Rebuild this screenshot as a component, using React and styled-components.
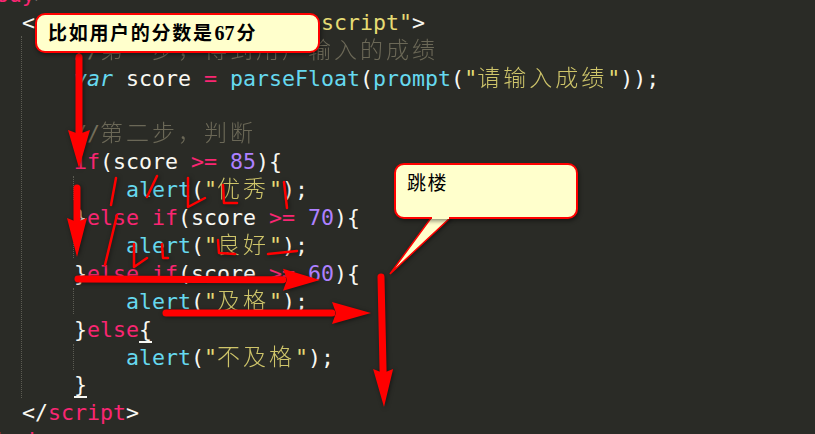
import React from "react";
import styled, { createGlobalStyle } from "styled-components";

const Global = createGlobalStyle`
  html, body {
    margin: 0;
    padding: 0;
    background: #2a2b26;
    overflow: hidden;
  }
`;

const Screen = styled.div`
  position: relative;
  width: 815px;
  height: 434px;
  overflow: hidden;
  background: #2a2b26;
`;

const Code = styled.div`
  margin: -19px 0 0 -30px;
  font-family: "DejaVu Sans Mono", "Noto Sans CJK SC", monospace;
  font-size: 21.6px;
  color: #f8f8f2;
`;

const Line = styled.div`
  height: 27.9px;
  line-height: 27.9px;
  padding-left: ${(p) => p.$indent * 13}px;
  white-space: pre;
`;

const Kw = styled.span`
  color: #f92672;
`;
const Fn = styled.span`
  color: #66d9ef;
`;
const Str = styled.span`
  color: #e6db74;
`;
const Num = styled.span`
  color: #ae81ff;
`;
const Cm = styled.span`
  color: #75715e;
`;

// Chinese glyphs sit on a 2-column grid in the editor
const Han = styled.span`
  font-family: "Noto Sans CJK SC", sans-serif;
  font-size: 23px;
  font-weight: 300;
  line-height: 0;
  letter-spacing: 3px;
  opacity: 0.88;
`;

const Matched = styled.span`
  position: relative;
  &::after {
    content: "";
    position: absolute;
    left: 0;
    right: 0;
    bottom: -1px;
    height: 2px;
    background: #f8f8f2;
  }
`;

const Guide = styled.div`
  position: absolute;
  left: ${(p) => p.$x}px;
  top: ${(p) => p.$top}px;
  height: ${(p) => p.$height}px;
  border-left: 1px dotted #5c5c53;
`;

const Callout = styled.div`
  position: absolute;
  box-sizing: border-box;
  left: ${(p) => p.$x}px;
  top: ${(p) => p.$y}px;
  width: ${(p) => p.$w}px;
  height: ${(p) => p.$h}px;
  padding: 5px 0 0 11px;
  border: 2px solid #ff0000;
  border-radius: 10px;
  background: #ffffcc;
  box-shadow: 1px 2px 4px rgba(0, 0, 0, 0.45);
  color: #000;
  font-family: "Noto Sans CJK SC", sans-serif;
  font-size: 19px;
  line-height: 24px;
  white-space: nowrap;
`;

const TailGap = styled.div`
  position: absolute;
  left: 36px;
  bottom: -2px;
  width: 17px;
  height: 2px;
  background: #ffffcc;
`;

const Wide = styled.span`
  font-weight: 700;
  letter-spacing: 1.7px;
`;

const Digits = styled.span`
  font-family: "Liberation Serif", serif;
  font-weight: 700;
  font-size: 20px;
  margin-left: 1px;
  margin-right: 2px;
`;

const Plain = styled.span`
  letter-spacing: 1.5px;
`;

const Marks = styled.svg`
  position: absolute;
  left: 0;
  top: 0;
  filter: drop-shadow(1px 1px 2px rgba(0, 0, 0, 0.5));
`;

const arrows = [
  { from: [79, 57], to: [79, 168], base: 130, half: 11, w: 7 },
  { from: [77, 188], to: [77, 257], base: 218, half: 10, w: 7 },
  { from: [78, 279], to: [320, 280], base: 283, half: 11, w: 7 },
  { from: [166, 313], to: [371, 313], base: 332, half: 11, w: 7 },
  { from: [381, 277], to: [384, 407], base: 369, half: 10, w: 7 },
];

const scribbles = [
  "116,178 111,205",
  "157,176 147,197",
  "188,178 188,207 205,198",
  "223,185 224,203 237,203",
  "284,182 287,208",
  "117,215 105,265",
  "134,244 134,267 147,258",
  "162,244 163,258 168,258",
  "218,240 219,253 235,254",
  "268,254 297,251",
];

const Arrow = ({ from, to, base, half, w }) => {
  const vertical = Math.abs(to[1] - from[1]) > Math.abs(to[0] - from[0]);
  const t = vertical ? (base - from[1]) / (to[1] - from[1]) : (base - from[0]) / (to[0] - from[0]);
  const bx = vertical ? from[0] + (to[0] - from[0]) * t : base;
  const by = vertical ? base : from[1] + (to[1] - from[1]) * t;
  const head = vertical
    ? `${bx - half},${by} ${to[0]},${to[1]} ${bx + half},${by} ${bx},${by + 4}`
    : `${bx},${by - half} ${to[0]},${to[1]} ${bx},${by + half} ${bx + 4},${by}`;
  return (
    <g>
      <line x1={from[0]} y1={from[1]} x2={bx} y2={by + (vertical ? 4 : 0)} stroke="#ff0000" strokeWidth={w} strokeLinecap="round" />
      <polygon points={head} fill="#ff0000" />
    </g>
  );
};

const App = () => (
  <Screen>
    <Global />
    <Code>
      <Line $indent={0}>{"<"}<Kw>body</Kw>{">"}</Line>
      <Line $indent={4}>{"<"}<Kw>script</Kw> <Fn>type</Fn><Kw>=</Kw><Str>"text/javascript"</Str>{">"}</Line>
      <Line $indent={8}><Cm>//<Han>第一步，得到用户输入的成绩</Han></Cm></Line>
      <Line $indent={8}><Fn><i>var</i></Fn> score <Kw>=</Kw> <Fn>parseFloat</Fn>(<Fn>prompt</Fn>(<Str>"<Han>请输入成绩</Han>"</Str>));</Line>
      <Line $indent={0} />
      <Line $indent={8}><Cm>//<Han>第二步，判断</Han></Cm></Line>
      <Line $indent={8}><Kw>if</Kw>(score <Kw>&gt;=</Kw> <Num>85</Num>){"{"}</Line>
      <Line $indent={12}><Fn>alert</Fn>(<Str>"<Han>优秀</Han>"</Str>);</Line>
      <Line $indent={8}>{"}"}<Kw>else if</Kw>(score <Kw>&gt;=</Kw> <Num>70</Num>){"{"}</Line>
      <Line $indent={12}><Fn>alert</Fn>(<Str>"<Han>良好</Han>"</Str>);</Line>
      <Line $indent={8}>{"}"}<Kw>else if</Kw>(score <Kw>&gt;=</Kw> <Num>60</Num>){"{"}</Line>
      <Line $indent={12}><Fn>alert</Fn>(<Str>"<Han>及格</Han>"</Str>);</Line>
      <Line $indent={8}>{"}"}<Kw>else</Kw><Matched>{"{"}</Matched></Line>
      <Line $indent={12}><Fn>alert</Fn>(<Str>"<Han>不及格</Han>"</Str>);</Line>
      <Line $indent={8}><Matched>{"}"}</Matched></Line>
      <Line $indent={4}>{"</"}<Kw>script</Kw>{">"}</Line>
      <Line $indent={0}>{"</"}<Kw>body</Kw>{">"}</Line>
    </Code>

    <Guide $x={21} $top={36} $height={362} />
    <Guide $x={73} $top={176} $height={24} />
    <Guide $x={73} $top={232} $height={26} />
    <Guide $x={73} $top={288} $height={26} />
    <Guide $x={73} $top={344} $height={26} />

    <Marks width="815" height="434" viewBox="0 0 815 434">
      <polygon points="431,218 450,218 390,274" fill="#ffffcc" stroke="#ff0000" strokeWidth="1.5" />
      {scribbles.map((points) => (
        <polyline key={points} points={points} fill="none" stroke="#ff0000" strokeWidth="2.5" strokeLinecap="round" strokeLinejoin="round" />
      ))}
      {arrows.map((a) => (
        <Arrow key={a.from.join()} {...a} />
      ))}
    </Marks>

    <Callout $x={35} $y={13} $w={285} $h={40}>
      <Wide>比如用户的分数是</Wide><Digits>67</Digits><Wide>分</Wide>
    </Callout>
    <Callout $x={394} $y={163} $w={184} $h={56}>
      <Plain>跳楼</Plain>
      <TailGap />
    </Callout>
  </Screen>
);

export default App;
